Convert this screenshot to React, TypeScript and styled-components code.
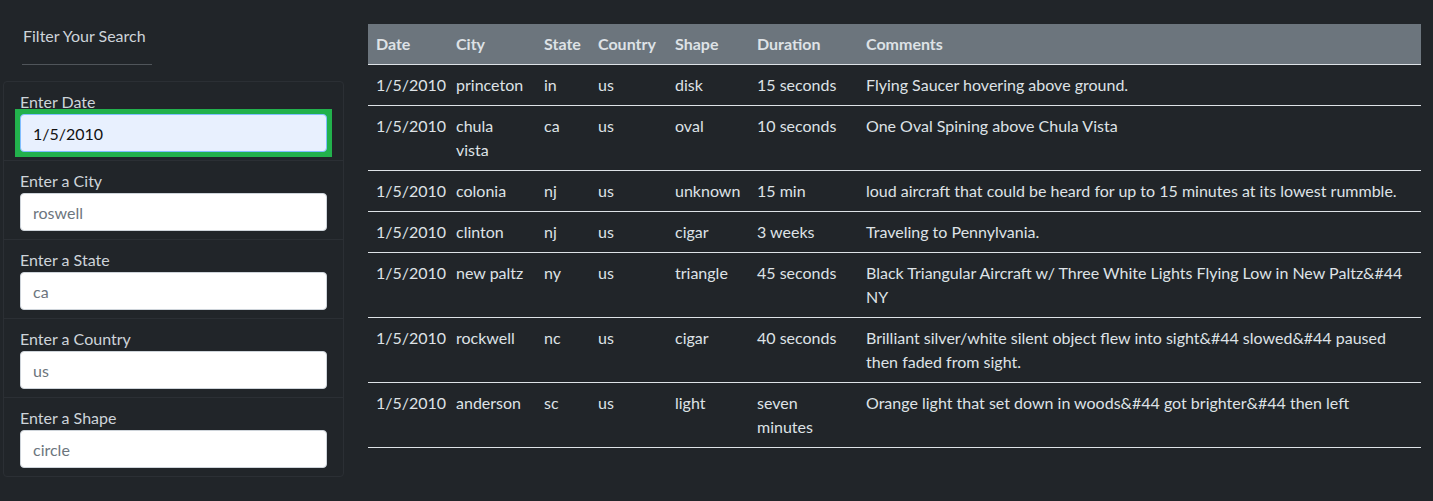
import React from "react";
import styled, { createGlobalStyle } from "styled-components";

const Global = createGlobalStyle`
  html, body { margin: 0; padding: 0; background: #212529; }
  body {
    font-family: Lato, "Liberation Sans", sans-serif;
    font-size: 16px;
    line-height: 24px;
    color: #dee2e6;
  }
  * { box-sizing: border-box; }
`;

const Page = styled.div`
  display: flex;
  align-items: flex-start;
  width: 1433px;
  min-height: 501px;
`;

const Sidebar = styled.aside`
  width: 344px;
  padding-left: 3px;
  flex-shrink: 0;
`;

const FilterHead = styled.div`
  margin: 24px 0 0 19px;
  width: 130px;
`;

const FilterTitle = styled.div`
  padding-left: 1px;
  font-size: 16px;
  line-height: 24px;
  color: #ced4da;
`;

const Rule = styled.hr`
  margin: 16px 0;
  border: 0;
  border-top: 1px solid #50555a;
`;

const Card = styled.ul`
  list-style: none;
  margin: 0;
  padding: 0;
  border: 1px solid #2b2f34;
  border-radius: 4px;
`;

const Item = styled.li<{ $last?: boolean }>`
  display: flex;
  flex-direction: column;
  padding: 8px 16px;
  border-bottom: ${(p) => (p.$last ? "0" : "1px solid #2b2f34")};
`;

const Label = styled.label`
  display: block;
  line-height: 24px;
  color: #ced4da;
`;

const FocusRing = styled.div<{ $on?: boolean }>`
  margin: ${(p) => (p.$on ? "-5px" : "0")};
  padding: ${(p) => (p.$on ? "5px" : "0")};
  background: ${(p) => (p.$on ? "#22b14c" : "transparent")};
`;

const Input = styled.input<{ $focused?: boolean }>`
  display: block;
  width: 100%;
  height: 38px;
  padding: 6px 12px;
  font-family: inherit;
  font-size: 16px;
  color: #111;
  background: ${(p) => (p.$focused ? "#e8f0fe" : "#fff")};
  border: 1px solid ${(p) => (p.$focused ? "#80bdff" : "#ced4da")};
  border-radius: 4px;
  outline: none;
  &::placeholder { color: #6c757d; }
`;

const Main = styled.main`
  margin: 24px 0 0 24px;
  width: 1053px;
`;

const Table = styled.table`
  width: 1053px;
  table-layout: fixed;
  border-collapse: collapse;
  color: #dee2e6;
`;

const Th = styled.th`
  text-align: left;
  vertical-align: top;
  padding: 8px;
  font-weight: 700;
  color: #dee2e6;
  background: #6c757d;
  border-bottom: 1px solid #dee2e6;
  white-space: nowrap;
`;

const Td = styled.td`
  vertical-align: top;
  padding: 8px;
  border-top: 1px solid #dee2e6;
`;

const Tr = styled.tr`
  &:last-child td { border-bottom: 1px solid #dee2e6; }
`;

const cols = [80, 88, 54, 77, 82, 109, 563];
const heads = ["Date", "City", "State", "Country", "Shape", "Duration", "Comments"];

const rows: string[][] = [
  ["1/5/2010", "princeton", "in", "us", "disk", "15 seconds", "Flying Saucer hovering above ground."],
  ["1/5/2010", "chula vista", "ca", "us", "oval", "10 seconds", "One Oval Spining above Chula Vista"],
  ["1/5/2010", "colonia", "nj", "us", "unknown", "15 min", "loud aircraft that could be heard for up to 15 minutes at its lowest rummble."],
  ["1/5/2010", "clinton", "nj", "us", "cigar", "3 weeks", "Traveling to Pennylvania."],
  ["1/5/2010", "new paltz", "ny", "us", "triangle", "45 seconds", "Black Triangular Aircraft w/ Three White Lights Flying Low in New Paltz&#44 NY"],
  ["1/5/2010", "rockwell", "nc", "us", "cigar", "40 seconds", "Brilliant silver/white silent object flew into sight&#44 slowed&#44 paused then faded from sight."],
  ["1/5/2010", "anderson", "sc", "us", "light", "seven minutes", "Orange light that set down in woods&#44 got brighter&#44 then left"],
];

const filters = [
  { label: "Enter Date", value: "1/5/2010", placeholder: "", focused: true },
  { label: "Enter a City", value: "", placeholder: "roswell" },
  { label: "Enter a State", value: "", placeholder: "ca" },
  { label: "Enter a Country", value: "", placeholder: "us" },
  { label: "Enter a Shape", value: "", placeholder: "circle" },
];

export default function App() {
  return (
    <>
      <Global />
      <Page>
        <Sidebar>
          <FilterHead>
            <FilterTitle>Filter Your Search</FilterTitle>
            <Rule />
          </FilterHead>
          <Card>
            {filters.map((f, i) => (
              <Item key={f.label} $last={i === filters.length - 1}>
                <Label>{f.label}</Label>
                <FocusRing $on={f.focused}>
                  <Input
                    $focused={f.focused}
                    defaultValue={f.value}
                    placeholder={f.placeholder}
                  />
                </FocusRing>
              </Item>
            ))}
          </Card>
        </Sidebar>
        <Main>
          <Table>
            <colgroup>
              {cols.map((w, i) => (
                <col key={i} style={{ width: w }} />
              ))}
            </colgroup>
            <thead>
              <tr>
                {heads.map((h) => (
                  <Th key={h}>{h}</Th>
                ))}
              </tr>
            </thead>
            <tbody>
              {rows.map((r, i) => (
                <Tr key={i}>
                  {r.map((c, j) => (
                    <Td key={j}>{c}</Td>
                  ))}
                </Tr>
              ))}
            </tbody>
          </Table>
        </Main>
      </Page>
    </>
  );
}
